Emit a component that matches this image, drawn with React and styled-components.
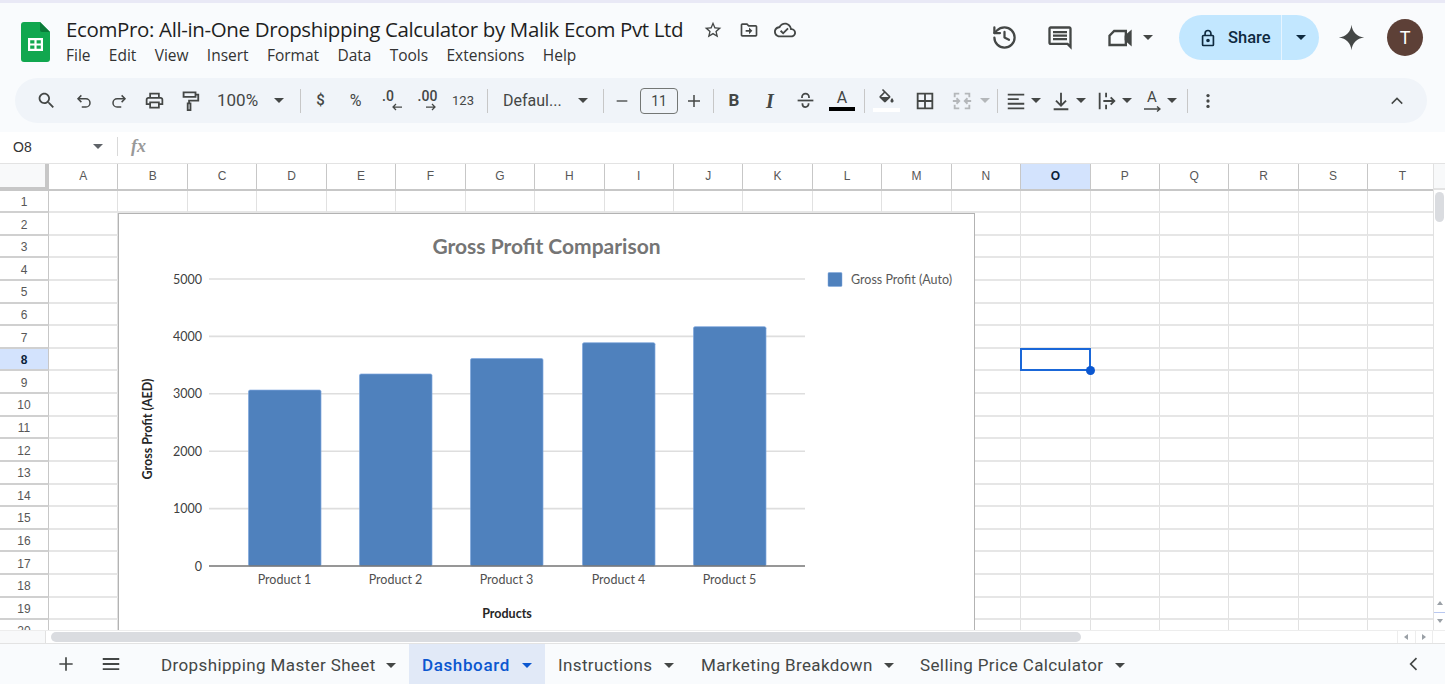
import React from "react";
import styled, { createGlobalStyle } from "styled-components";

const Global = createGlobalStyle`
  html, body { margin: 0; padding: 0; background: #f9fbfd; overflow: hidden; }
  * { box-sizing: border-box; }
`;

const Page = styled.div`
  width: 1445px; height: 684px; display: flex; flex-direction: column; overflow: hidden;
  background: #f9fbfd; font-family: Roboto, "Liberation Sans", sans-serif; color: #1f1f1f;
  border-top: 3px solid #e9e9f6;
`;
const Header = styled.header`
  height: 75px; flex: none; display: flex; align-items: flex-start; padding: 12px 0 0 21px;
`;
const Logo = styled.svg`
  width: 29px; height: 40px; flex: none; margin-top: 7px; margin-right: 16px;
`;
const TitleBlock = styled.div`
  display: flex; flex-direction: column;
`;
const TitleRow = styled.div`
  display: flex; align-items: center; height: 30px;
`;
const DocTitle = styled.div`
  font-family: "Open Sans", sans-serif; font-size: 20.5px; line-height: 28px; height: 30px; color: #1f1f1f;
  letter-spacing: -0.36px; width: 629px; white-space: nowrap;
`;
const TitleIcon = styled.span`
  width: 36px; display: flex; justify-content: center; color: #444746;
`;
const MenuBar = styled.nav`
  display: flex; gap: 18.3px; margin-top: -2px; font-family: "Open Sans", sans-serif;
  font-size: 15.5px; line-height: 24px; color: #333;
`;
const HeaderRight = styled.div`
  margin-left: auto; display: flex; align-items: center; height: 45px; color: #444746; padding-right: 22px;
`;
const HeadBtn = styled.span`
  width: ${p => p.$w}px; margin-left: ${p => p.$ml || 0}px; display: flex; align-items: center; justify-content: center; gap: 9px;
`;
const Share = styled.div`
  width: 140px; height: 45px; border-radius: 23px; background: #c2e7ff; display: flex; align-items: stretch;
  margin-left: 18px; margin-right: 18px; color: #0f2a3f;
`;
const ShareMain = styled.div`
  width: 103px; display: flex; align-items: center; padding-left: 19px; gap: 10px;
  border-right: 1px solid #e6f4ff; font-size: 16.5px; font-weight: 500;
`;
const ShareDrop = styled.div`
  flex: 1; display: flex; align-items: center; justify-content: center;
`;
const Avatar = styled.div`
  width: 36px; height: 37px; border-radius: 50%; background: #5d4037; color: #fff; margin-left: 21px;
  display: flex; align-items: center; justify-content: center; font-size: 18px; font-weight: 400;
`;
const Toolbar = styled.div`
  height: 45px; flex: none; margin: 0 18px 0 15px; border-radius: 23px; background: #f0f4f9;
  display: flex; align-items: center; padding: 0 12px 0 13px; color: #444746;
  font-family: Roboto, sans-serif;
`;
const Slot = styled.span`
  width: ${p => p.$w}px; margin-left: ${p => p.$ml || 0}px; height: 30px; flex: none; display: flex;
  flex-direction: column; align-items: center; justify-content: center; color: ${p => p.$c || "inherit"};
`;
const ToolText = styled.span`
  font-size: ${p => p.$s || 14}px; line-height: 1; font-weight: ${p => p.$b || 400};
  font-family: ${p => p.$f || "Roboto, sans-serif"}; font-style: ${p => p.$i ? "italic" : "normal"};
`;
const DecimalText = styled.span`
  font-size: 14px; line-height: 13px; font-weight: 500; margin-left: ${p => p.$ml}px;
`;
const DecimalArrow = styled.svg`
  width: 12px; height: 8px; display: block; margin-left: ${p => p.$ml}px; fill: none; stroke: currentColor; stroke-width: 2.5;
`;
const RotateArrow = styled.svg`
  width: 17px; height: 6px; display: block; margin-top: 1px; fill: none; stroke: currentColor; stroke-width: 1.4;
`;
const SelectText = styled.span`
  width: ${p => p.$w}px; flex: none; padding-left: ${p => p.$pl}px; font-size: 16px; white-space: nowrap; color: #444746;
`;
const Caret = styled.span`
  width: 0; height: 0; flex: none; border-left: 5px solid transparent; border-right: 5px solid transparent;
  border-top: 5px solid ${p => p.$c || "currentColor"};
`;
const CaretSlot = styled.span`
  width: ${p => p.$w}px; flex: none; display: flex; justify-content: center; color: ${p => p.$c || "inherit"};
`;
const Divider = styled.span`
  width: 1px; height: 24px; flex: none; background: #c7c7c7; margin-left: ${p => p.$l}px; margin-right: ${p => p.$r}px;
`;
const SizeBox = styled.span`
  width: 38px; height: 26px; flex: none; border: 1px solid #747775; border-radius: 4px; display: flex;
  align-items: center; justify-content: center; font-size: 14px; color: #444746;
`;
const ColorBar = styled.span`
  width: ${p => p.$w}px; height: 4px; margin-top: ${p => p.$mt || 0}px; background: ${p => p.$c};
`;
const MenuGroup = styled.span`
  display: flex; align-items: center; margin-left: ${p => p.$ml}px;
`;
const Collapse = styled.span`
  margin-left: auto; display: flex; width: 36px; justify-content: center;
`;
const FormulaBar = styled.div`
  height: 32px; flex: none; margin-top: 9px; padding-bottom: 2px; background: #fff; display: flex; align-items: center;
  font-family: "Liberation Sans", sans-serif; color: #1f1f1f; border-bottom: 1px solid #e3e3e3;
`;
const NameBox = styled.div`
  width: 117px; display: flex; align-items: center; font-size: 14px; padding: 0 14px 0 13px; justify-content: space-between; color: #333;
`;
const Fx = styled.div`
  border-left: 1px solid #d9d9d9; height: 19px; padding-left: 13px; font-family: "Liberation Serif", serif;
  font-style: italic; font-size: 18px; line-height: 18px; color: #999; font-weight: 700;
`;
const Sheet = styled.div`
  height: 466px; flex: none; display: flex; background: #fff;
`;
const GridArea = styled.div`
  width: 1433px; position: relative; overflow: hidden;
`;
const Grid = styled.div`
  display: grid; grid-template-columns: 49px repeat(20, 69.45px);
  grid-template-rows: 26.6px repeat(20, 22.62px); font-family: "Liberation Sans", sans-serif;
`;
const Corner = styled.div`
  background: #f8f9fa; border-right: 4px solid #c7c7c7; border-bottom: 4px solid #c7c7c7;
`;
const ColHead = styled.div`
  display: flex; align-items: center; justify-content: center; font-size: 12px;
  border-right: 1px solid #c7c7c7; border-bottom: 2px solid #c7c7c7;
  background: ${p => p.$on ? "#d3e3fd" : "#fff"}; color: ${p => p.$on ? "#0b1f3a" : "#575757"};
  font-weight: ${p => p.$on ? 700 : 400};
`;
const RowHead = styled.div`
  display: flex; align-items: center; justify-content: center; font-size: 12px; padding-top: 2px;
  border-right: 1px solid #c7c7c7; border-bottom: 2px solid #d0d0d0;
  background: ${p => p.$on ? "#d3e3fd" : "#fff"}; color: ${p => p.$on ? "#0b1f3a" : "#575757"};
  font-weight: ${p => p.$on ? 700 : 400};
`;
const Cell = styled.div`
  position: relative; border-right: 1px solid #e1e1e1; border-bottom: 2px solid #e6e6e6;
  ${p => p.$sel && `
    &::before { content: ""; position: absolute; inset: -1px -1px -2px -1px; border: 2px solid #1a67d8; }
    &::after { content: ""; position: absolute; right: -5px; bottom: -6px; width: 9px; height: 9px;
      border-radius: 50%; background: #0b57d0; z-index: 2; }
  `}
`;
const ChartBox = styled.div`
  position: absolute; left: 118px; top: 49px; width: 857px; height: 432px; background: #fff;
  border: 1px solid #b3b3b3;
`;
const ChartSvg = styled.svg`
  display: block; width: 855px; height: 430px;
`;
const VScroll = styled.div`
  width: 12px; flex: none; display: flex; flex-direction: column; align-items: center; background: #fff;
  border-left: 1px solid #e1e1e1;
`;
const VCap = styled.div`
  width: 100%; height: 26px; background: #f8f9fa; flex: none; border-bottom: 2px solid #e3e3e3;
`;
const VThumb = styled.div`
  width: 9px; height: 30px; margin-top: 2px; border-radius: 5px; background: #dadce0;
`;
const VArrows = styled.div`
  margin-top: auto; width: 100%; height: 22px; margin-bottom: 7px; display: flex; flex-direction: column;
  align-items: center; justify-content: space-between; color: #9aa0a6;
`;
const VMark = styled.div`
  width: 100%; height: 1px; background: #b9c8f0;
`;
const Tri = styled.span`
  width: 0; height: 0; border-left: 3px solid transparent; border-right: 3px solid transparent;
  ${p => p.$up ? "border-bottom: 4px solid #9aa0a6;" : "border-top: 4px solid #9aa0a6;"}
`;
const HScroll = styled.div`
  height: 14px; flex: none; background: #fff; display: flex; align-items: center; border-top: 1px solid #ededed;
  border-bottom: 1px solid #e3e3e3;
`;
const HLeft = styled.div`
  width: 46px; height: 100%; flex: none; background: #f8f9fa; border-right: 1px solid #e1e1e1;
`;
const HThumb = styled.div`
  width: 1030px; height: 10px; margin-left: 5px; border-radius: 5px; background: #dadce0;
`;
const HArrows = styled.div`
  margin-left: auto; margin-right: 12px; width: 36px; height: 100%; display: flex; border-left: 1px solid #ededed;
`;
const HArrow = styled.span`
  flex: 1; display: flex; align-items: center; justify-content: center; border-right: 1px solid #ededed;
`;
const HTri = styled.span`
  width: 0; height: 0; border-top: 3px solid transparent; border-bottom: 3px solid transparent;
  ${p => p.$left ? "border-right: 4px solid #9aa0a6;" : "border-left: 4px solid #9aa0a6;"}
`;
const Tabs = styled.div`
  height: 40px; flex: none; display: flex; align-items: stretch; background: #f9fbfd; color: #444746; padding-left: 56px;
`;
const TabTool = styled.span`
  width: ${p => p.$w}px; flex: none; display: flex; align-items: center; justify-content: center;
`;
const Tab = styled.div`
  display: flex; align-items: center; flex: none; width: ${p => p.$w}px; padding: 2px 0 0 ${p => p.$pl}px;
  background: ${p => p.$on ? "#e1e9f7" : "transparent"}; color: ${p => p.$on ? "#0b57d0" : "#444746"};
  font-size: 17px; letter-spacing: ${p => p.$on ? "0.62px" : "0.38px"}; font-weight: ${p => p.$on ? 500 : 400}; white-space: nowrap;
`;
const TabLabel = styled.span`
  width: ${p => p.$w}px; flex: none;
`;
const TabEnd = styled.span`
  margin-left: auto; width: 62px; display: flex; align-items: center; justify-content: center;
`;

const Ico = styled.svg`
  width: ${p => p.$s}px; height: ${p => p.$s}px; flex: none; display: block;
  fill: ${p => p.$line ? "none" : "currentColor"};
  stroke: ${p => p.$line ? "currentColor" : "none"};
  stroke-width: ${p => p.$sw || 2};
  stroke-linecap: ${p => p.$cap || "butt"};
  stroke-linejoin: ${p => p.$join || "miter"};
`;
const P = ({ s, d, line, sw, cap, join, children }) => (
  <Ico $s={s} $line={line} $sw={sw} $cap={cap} $join={join} viewBox="0 0 24 24">
    {d && <path d={d} />}
    {children}
  </Ico>
);

const paths = {
  star: "M22 9.24l-7.19-.62L12 2 9.19 8.63 2 9.24l5.46 4.73L5.82 21 12 17.27 18.18 21l-1.63-7.03L22 9.24zM12 15.4l-3.76 2.27 1-4.28-3.32-2.88 4.38-.38L12 6.1l1.71 4.04 4.38.38-3.32 2.88 1 4.28L12 15.4z",
  move: "M20 6h-8l-2-2H4c-1.11 0-1.99.89-1.99 2L2 18c0 1.11.89 2 2 2h16c1.11 0 2-.89 2-2V8c0-1.11-.89-2-2-2zm0 12H4V6h5.17l2 2H20v10zm-8-4H8v-2h4V9l4 4-4 4v-3z",
  cloud: "M19.35 10.04C18.67 6.59 15.64 4 12 4 9.11 4 6.6 5.64 5.35 8.04 2.34 8.36 0 10.91 0 14c0 3.31 2.69 6 6 6h13c2.76 0 5-2.24 5-5 0-2.64-2.05-4.78-4.65-4.96zM19 18H6c-2.21 0-4-1.79-4-4 0-2.05 1.53-3.76 3.56-3.97l1.07-.11.5-.95C8.08 7.14 9.94 6 12 6c2.62 0 4.88 1.86 5.39 4.43l.3 1.5 1.53.11c1.56.1 2.78 1.41 2.78 2.96 0 1.65-1.35 3-3 3zm-9-3.82l-2.09-2.09L6.5 13.5 10 17l6.01-6.01-1.41-1.41z",
  comment: "M21.99 4c0-1.1-.89-2-1.99-2H4c-1.1 0-2 .9-2 2v12c0 1.1.9 2 2 2h14l4 4-.01-18zM20 4v13.17L18.83 16H4V4h16zM6 12h12v2H6zm0-3h12v2H6zm0-3h12v2H6z",
  spark: "M12 1.5C12.7 7.6 16.4 11.3 22.5 12 16.4 12.7 12.7 16.4 12 22.5 11.3 16.4 7.6 12.7 1.5 12 7.6 11.3 11.3 7.6 12 1.5Z",
  search: "M15.5 14h-.79l-.28-.27C15.41 12.59 16 11.11 16 9.5 16 5.91 13.09 3 9.5 3S3 5.91 3 9.5 5.91 16 9.5 16c1.61 0 3.09-.59 4.23-1.57l.27.28v.79l5 4.99L20.49 19l-4.99-5zm-6 0C7.01 14 5 11.99 5 9.5S7.01 5 9.5 5 14 7.01 14 9.5 11.99 14 9.5 14z",
  print: "M19 8h-1V3H6v5H5c-1.66 0-3 1.34-3 3v6h4v4h12v-4h4v-6c0-1.66-1.34-3-3-3zM8 5h8v3H8V5zm8 12v2H8v-4h8v2zm2-2v-2H6v2H4v-4c0-.55.45-1 1-1h14c.55 0 1 .45 1 1v4h-2z",
  fill: "M16.56 8.94L7.62 0 6.21 1.41l2.38 2.38-5.15 5.15c-.59.59-.59 1.54 0 2.12l5.5 5.5c.29.29.68.44 1.06.44s.77-.15 1.06-.44l5.5-5.5c.59-.58.59-1.53 0-2.12zM5.21 10L10 5.21 14.79 10H5.21zM19 11.5s-2 2.17-2 3.5c0 1.1.9 2 2 2s2-.9 2-2c0-1.33-2-3.5-2-3.5z",
  borders: "M3 3v18h18V3H3zm8 16H5v-6h6v6zm0-8H5V5h6v6zm8 8h-6v-6h6v6zm0-8h-6V5h6v6z",
};

const columns = "ABCDEFGHIJKLMNOPQRST".split("");
const rows = Array.from({ length: 20 }, (_, i) => i + 1);

const products = [
  { name: "Product 1", x: 248.5, value: 3065 },
  { name: "Product 2", x: 359.5, value: 3345 },
  { name: "Product 3", x: 470.5, value: 3615 },
  { name: "Product 4", x: 582.5, value: 3890 },
  { name: "Product 5", x: 693.5, value: 4170 },
];
const ZERO = 566;
const PER = 57.4 / 1000;
const ticks = [0, 1000, 2000, 3000, 4000, 5000];

const Chart = () => (
  <ChartBox>
    <ChartSvg viewBox="119 214 855 430" fontFamily="Lato, sans-serif">
      <text x="546.5" y="254" textAnchor="middle" fontSize="21" fontWeight="700" fill="#757575">Gross Profit Comparison</text>
      {ticks.map(t => (
        <g key={t}>
          {t > 0 && <line x1="209" x2="805" y1={ZERO - t * PER} y2={ZERO - t * PER} stroke="#dedede" strokeWidth="1.6" />}
          <text x="202" y={ZERO - t * PER + 4.5} textAnchor="end" fontSize="12.5" fill="#404040">{t}</text>
        </g>
      ))}
      {products.map(p => (
        <g key={p.name}>
          <rect x={p.x} y={ZERO - p.value * PER} width="72.5" height={p.value * PER} rx="1.5" fill="#4f81bd" stroke="#7ea6dc" strokeWidth="0.7" />
          <text x={p.x + 36} y="584" textAnchor="middle" fontSize="12.5" fill="#505050">{p.name}</text>
        </g>
      ))}
      <line x1="209" x2="805" y1={ZERO} y2={ZERO} stroke="#757575" strokeWidth="1.6" />
      <text x="507" y="618" textAnchor="middle" fontSize="12.5" fontWeight="700" fill="#262626">Products</text>
      <text transform="translate(151.5 429) rotate(-90)" textAnchor="middle" fontSize="12.5" fontWeight="700" fill="#262626">Gross Profit (AED)</text>
      <rect x="828" y="272.5" width="14" height="14" rx="1" fill="#4f81bd" stroke="#7ea6dc" strokeWidth="0.5" />
      <text x="851" y="283.5" fontSize="12.5" fill="#595959">Gross Profit (Auto)</text>
    </ChartSvg>
  </ChartBox>
);

const SheetGrid = () => (
  <Grid>
    <Corner />
    {columns.map(c => <ColHead key={c} $on={c === "O"}>{c}</ColHead>)}
    {rows.map(r => (
      <React.Fragment key={r}>
        <RowHead $on={r === 8}>{r}</RowHead>
        {columns.map(c => <Cell key={c} $sel={r === 8 && c === "O"} />)}
      </React.Fragment>
    ))}
  </Grid>
);

export default function App() {
  return (
    <Page>
      <Global />
      <Header>
        <Logo viewBox="0 0 29 40">
          <path d="M3 0H19L29 10V37a3 3 0 0 1-3 3H3a3 3 0 0 1-3-3V3a3 3 0 0 1 3-3Z" fill="#11a74f" />
          <path d="M19 0L29 10H21a2 2 0 0 1-2-2Z" fill="#0b7a39" />
          <path d="M7 16H22V29H7ZM9.2 18.2V21.4H13.4V18.2ZM15.6 18.2V21.4H19.8V18.2ZM9.2 23.6V26.8H13.4V23.6ZM15.6 23.6V26.8H19.8V23.6Z" fill="#fff" fillRule="evenodd" />
        </Logo>
        <TitleBlock>
          <TitleRow>
            <DocTitle>EcomPro: All-in-One Dropshipping Calculator by Malik Ecom Pvt Ltd</DocTitle>
            <TitleIcon><P s={20} d={paths.star} /></TitleIcon>
            <TitleIcon><P s={20} d={paths.move} /></TitleIcon>
            <TitleIcon><P s={22} d={paths.cloud} /></TitleIcon>
          </TitleRow>
          <MenuBar>
            {["File", "Edit", "View", "Insert", "Format", "Data", "Tools", "Extensions", "Help"].map(m => <span key={m}>{m}</span>)}
          </MenuBar>
        </TitleBlock>
        <HeaderRight>
          <HeadBtn $w={56}>
            <P s={27} line sw={2} cap="round" join="round">
              <path d="M3 12a9 9 0 1 0 9-9 9.75 9.75 0 0 0-6.74 2.74L3 8" />
              <path d="M3 3v5h5" />
              <path d="M12 7v5l4 2" />
            </P>
          </HeadBtn>
          <HeadBtn $w={56}><P s={28} d={paths.comment} /></HeadBtn>
          <HeadBtn $w={64} $ml={9}>
            <P s={28} line sw={2}>
              <path d="M7 6h10v12H3V10z" />
              <path d="M17 10.5L21 7v10l-4-3.5z" fill="currentColor" />
            </P>
            <Caret />
          </HeadBtn>
          <Share>
            <ShareMain>
              <P s={20} line sw={2}>
                <path d="M6.5 9h11a1 1 0 0 1 1 1v10a1 1 0 0 1-1 1h-11a1 1 0 0 1-1-1V10a1 1 0 0 1 1-1Z" />
                <path d="M8.5 9V6.5a3.5 3.5 0 0 1 7 0V9" />
                <circle cx="12" cy="15" r="1.2" fill="currentColor" />
              </P>
              Share
            </ShareMain>
            <ShareDrop><Caret /></ShareDrop>
          </Share>
          <P s={29} d={paths.spark} />
          <Avatar>T</Avatar>
        </HeaderRight>
      </Header>

      <Toolbar>
        <Slot $w={37}><P s={21} d={paths.search} /></Slot>
        <Slot $w={37}>
          <P s={18} line sw={2}>
            <path d="M8.5 13.5L4 9l4.5-4.5" /><path d="M4 9h10.5a5 5 0 0 1 0 11H9" />
          </P>
        </Slot>
        <Slot $w={34}>
          <P s={18} line sw={2}>
            <path d="M15.5 13.5L20 9l-4.5-4.5" /><path d="M20 9H9.5a5 5 0 0 0 0 11H15" />
          </P>
        </Slot>
        <Slot $w={36}><P s={21} d={paths.print} /></Slot>
        <Slot $w={36}>
          <P s={22} line sw={2}>
            <path d="M5 2.5h13v5H5z" /><path d="M18 5h3v6.5H11v3" /><path d="M9.5 14.5h3v7.5h-3z" />
          </P>
        </Slot>
        <SelectText $w={61} $pl={9}><ToolText $s={17}>100%</ToolText></SelectText>
        <CaretSlot $w={20}><Caret /></CaretSlot>
        <Divider $l={11} $r={2} />
        <Slot $w={35}><ToolText $s={15} $b={500}>$</ToolText></Slot>
        <Slot $w={35}><ToolText $s={16}>%</ToolText></Slot>
        <Slot $w={37}>
          <DecimalText $ml={-7}>.0</DecimalText>
          <DecimalArrow $ml={10} viewBox="0 0 24 16"><path d="M22 8H4M10 2L4 8l6 6" /></DecimalArrow>
        </Slot>
        <Slot $w={35}>
          <DecimalText $ml={0}>.00</DecimalText>
          <DecimalArrow $ml={7} viewBox="0 0 24 16"><path d="M2 8h18M14 2l6 6-6 6" /></DecimalArrow>
        </Slot>
        <Slot $w={36}><ToolText $s={13}>123</ToolText></Slot>
        <Divider $l={6} $r={0} />
        <SelectText $w={85} $pl={15}>Defaul...</SelectText>
        <CaretSlot $w={20}><Caret /></CaretSlot>
        <Divider $l={10} $r={0} />
        <Slot $w={36}><Ico $s={16} $line $sw={2} viewBox="0 0 24 24"><path d="M4 12h16" /></Ico></Slot>
        <SizeBox>11</SizeBox>
        <Slot $w={32}><Ico $s={18} $line $sw={2} viewBox="0 0 24 24"><path d="M4 12h16M12 4v16" /></Ico></Slot>
        <Divider $l={3} $r={2} />
        <Slot $w={36}><ToolText $s={17} $b={700}>B</ToolText></Slot>
        <Slot $w={36}><ToolText $s={20} $b={700} $i $f={'"Liberation Serif", serif'}>I</ToolText></Slot>
        <Slot $w={35}>
          <P s={21} line sw={2}>
            <path d="M8 9V8a4 4 0 0 1 8 0v1" /><path d="M3 12h18" /><path d="M8.5 15v1a3.5 3.5 0 0 0 7 0v-1" />
          </P>
        </Slot>
        <Slot $w={38}>
          <ToolText $s={16}>A</ToolText>
          <ColorBar $w={26} $c="#000" $mt={1} />
        </Slot>
        <Divider $l={3} $r={2} />
        <Slot $w={38}>
          <P s={19} d={paths.fill} />
          <ColorBar $w={27} $c="#fff" />
        </Slot>
        <Slot $w={40}><P s={22} d={paths.borders} /></Slot>
        <Slot $w={33} $c="#b4b7ba">
          <P s={22} line sw={2}>
            <path d="M9 4H4v4M4 16v4h5M15 4h5v4M20 16v4h-5M2 12h7M6 9l3 3-3 3M22 12h-7M18 9l-3 3 3 3" />
          </P>
        </Slot>
        <CaretSlot $w={14} $c="#b4b7ba"><Caret /></CaretSlot>
        <Divider $l={5} $r={0} />
        <MenuGroup $ml={5}>
          <Slot $w={26}>
            <P s={22} line sw={2}><path d="M3 5h18M3 10h12M3 15h18M3 20h18" /></P>
          </Slot>
          <CaretSlot $w={14}><Caret /></CaretSlot>
        </MenuGroup>
        <MenuGroup $ml={5}>
          <Slot $w={26}>
            <P s={22} line sw={2}><path d="M12 3v14M6.5 11.5L12 17l5.5-5.5M4 21h16" /></P>
          </Slot>
          <CaretSlot $w={14}><Caret /></CaretSlot>
        </MenuGroup>
        <MenuGroup $ml={6}>
          <Slot $w={26}>
            <P s={22} line sw={2}><path d="M4 3v18M11 3v5M11 16v5M8 12h12M16 8l4 4-4 4" /></P>
          </Slot>
          <CaretSlot $w={14}><Caret /></CaretSlot>
        </MenuGroup>
        <MenuGroup $ml={5}>
          <Slot $w={26}>
            <ToolText $s={15}>A</ToolText>
            <RotateArrow viewBox="0 0 17 6"><path d="M0 3h16M13 .5L16 3l-3 2.5" /></RotateArrow>
          </Slot>
          <CaretSlot $w={14}><Caret /></CaretSlot>
        </MenuGroup>
        <Divider $l={8} $r={2} />
        <Slot $w={36}>
          <P s={20}><circle cx="12" cy="5.5" r="2" /><circle cx="12" cy="12" r="2" /><circle cx="12" cy="18.5" r="2" /></P>
        </Slot>
        <Collapse>
          <P s={18} line sw={2}><path d="M5 15.5l7-7 7 7" /></P>
        </Collapse>
      </Toolbar>

      <FormulaBar>
        <NameBox>O8<Caret $c="#5f6368" /></NameBox>
        <Fx>fx</Fx>
      </FormulaBar>

      <Sheet>
        <GridArea>
          <SheetGrid />
          <Chart />
        </GridArea>
        <VScroll>
          <VCap />
          <VThumb />
          <VArrows>
            <Tri $up />
            <VMark />
            <Tri />
          </VArrows>
        </VScroll>
      </Sheet>

      <HScroll>
        <HLeft />
        <HThumb />
        <HArrows>
          <HArrow><HTri $left /></HArrow>
          <HArrow><HTri /></HArrow>
        </HArrows>
      </HScroll>

      <Tabs>
        <TabTool $w={20}><P s={20} line sw={2}><path d="M4 12h16M12 4v16" /></P></TabTool>
        <TabTool $w={70}><P s={22} line sw={2}><path d="M3 6.5h18M3 12h18M3 17.5h18" /></P></TabTool>
        <Tab $w={263} $pl={15}>
          <TabLabel $w={225}>Dropshipping Master Sheet</TabLabel><Caret />
        </Tab>
        <Tab $w={136} $pl={13} $on>
          <TabLabel $w={100}>Dashboard</TabLabel><Caret />
        </Tab>
        <Tab $w={143} $pl={13}>
          <TabLabel $w={106}>Instructions</TabLabel><Caret />
        </Tab>
        <Tab $w={219} $pl={13}>
          <TabLabel $w={183}>Marketing Breakdown</TabLabel><Caret />
        </Tab>
        <Tab $w={220} $pl={13}>
          <TabLabel $w={195}>Selling Price Calculator</TabLabel><Caret />
        </Tab>
        <TabEnd>
          <P s={20} line sw={2}><path d="M15 5l-7 7 7 7" /></P>
        </TabEnd>
      </Tabs>
    </Page>
  );
}
